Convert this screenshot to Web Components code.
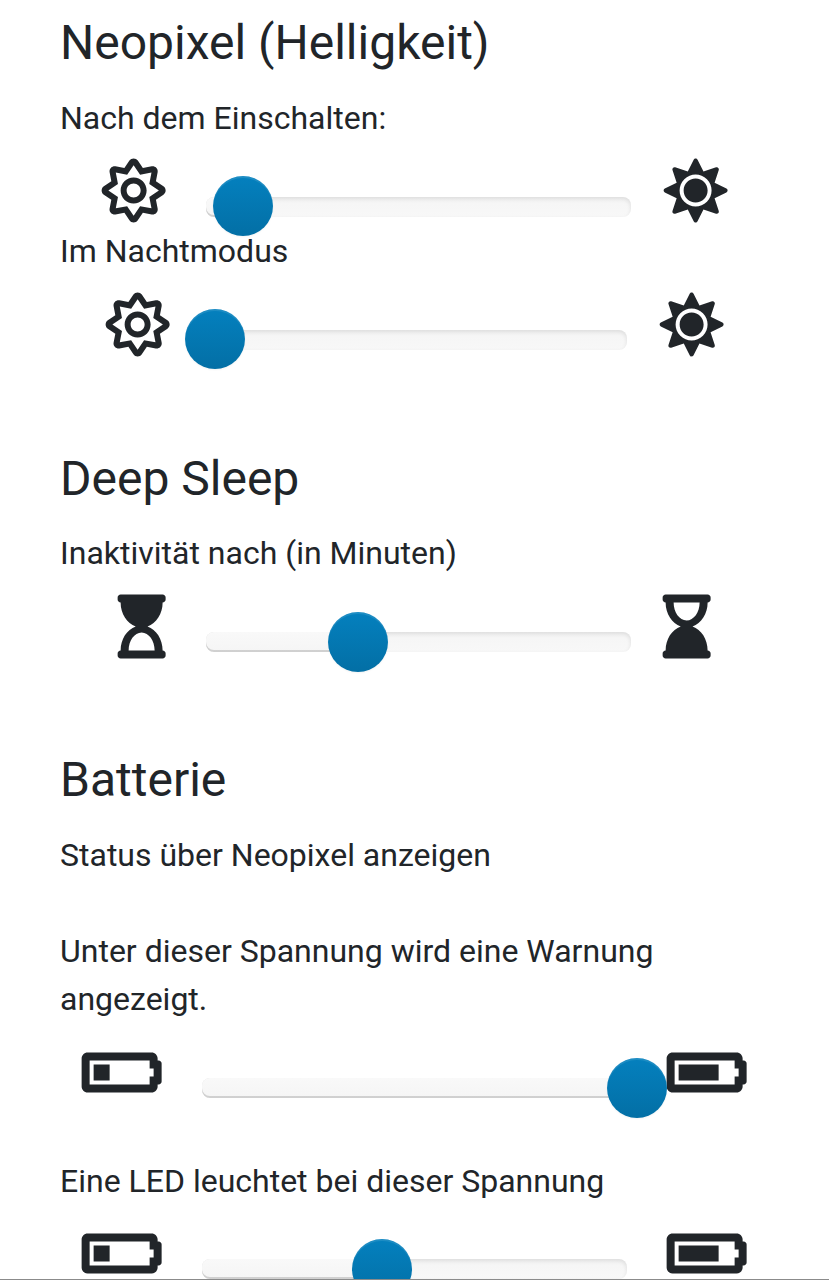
<!DOCTYPE html>
<html lang="de">
<head>
<meta charset="utf-8">
<title>Einstellungen</title>
<style>
html, body { margin: 0; height: 1280px; overflow: hidden; background: #fff; }
</style>
</head>
<body>
<settings-page></settings-page>
<script>
const ICONS = {
  'sun-outline': [512, 'M494.2 221.9l-59.8-40.5 13.7-71c2.6-13.2-1.6-26.8-11.1-36.4-9.6-9.5-23.2-13.7-36.2-11.1l-70.9 13.7-40.4-59.9c-15.1-22.3-51.9-22.3-67 0l-40.4 59.9-70.8-13.7C98 60.4 84.5 64.5 75 74.1c-9.5 9.6-13.7 23.1-11.1 36.3l13.7 71-59.8 40.5C6.6 229.5 0 242 0 255.5s6.7 26 17.8 33.5l59.8 40.5-13.7 71c-2.6 13.2 1.6 26.8 11.1 36.3 9.5 9.5 22.9 13.7 36.3 11.1l70.8-13.7 40.4 59.9C230 505.3 242.6 512 256 512s26-6.7 33.5-17.8l40.4-59.9 70.9 13.7c13.4 2.7 26.8-1.6 36.3-11.1 9.5-9.5 13.6-23.1 11.1-36.3l-13.7-71 59.8-40.5c11.1-7.5 17.8-20.1 17.8-33.5-.1-13.6-6.7-26.1-17.9-33.7zm-112.9 85.6l17.6 91.2-91-17.6L256 458l-51.9-77-90.9 17.6 17.6-91.2-76.8-52 76.8-52-17.6-91.2 91 17.6L256 53l51.9 76.9 91-17.6-17.6 91.1 76.8 52-76.8 52.1zM256 152c-57.3 0-104 46.7-104 104s46.7 104 104 104 104-46.7 104-104-46.7-104-104-104zm0 160c-30.9 0-56-25.1-56-56s25.1-56 56-56 56 25.1 56 56-25.1 56-56 56z'],
  'sun-solid': [512, 'M256 160c-52.9 0-96 43.1-96 96s43.1 96 96 96 96-43.1 96-96-43.1-96-96-96zm246.4 80.5l-94.7-47.3 33.5-100.4c4.5-13.6-8.4-26.5-21.9-21.9l-100.4 33.5-47.4-94.8c-6.4-12.8-24.6-12.8-31 0l-47.3 94.7L92.7 70.8c-13.6-4.5-26.5 8.4-21.9 21.9l33.5 100.4-94.7 47.4c-12.8 6.4-12.8 24.6 0 31l94.7 47.3-33.5 100.5c-4.5 13.6 8.4 26.5 21.9 21.9l100.4-33.5 47.3 94.7c6.4 12.8 24.6 12.8 31 0l47.3-94.7 100.4 33.5c13.6 4.5 26.5-8.4 21.9-21.9l-33.5-100.4 94.7-47.3c13-6.5 13-24.7.2-31.1zm-155.9 106c-49.9 49.9-131.1 49.9-181 0-49.9-49.9-49.9-131.1 0-181 49.9-49.9 131.1-49.9 181 0 49.9 49.9 49.9 131.1 0 181z'],
  'hourglass-start': [384, 'M360 0H24C10.745 0 0 10.745 0 24v16c0 13.255 10.745 24 24 24 0 90.965 51.016 167.734 120.842 192C75.016 280.266 24 357.035 24 448c-13.255 0-24 10.745-24 24v16c0 13.255 10.745 24 24 24h336c13.255 0 24-10.745 24-24v-16c0-13.255-10.745-24-24-24 0-90.965-51.016-167.734-120.842-192C308.984 231.734 360 154.965 360 64c13.255 0 24-10.745 24-24V24c0-13.255-10.745-24-24-24zm-64 448H88c0-77.458 46.204-144 104-144 57.786 0 104 66.517 104 144z'],
  'hourglass-end': [384, 'M360 64c13.255 0 24-10.745 24-24V24c0-13.255-10.745-24-24-24H24C10.745 0 0 10.745 0 24v16c0 13.255 10.745 24 24 24 0 90.965 51.016 167.734 120.842 192C75.016 280.266 24 357.035 24 448c-13.255 0-24 10.745-24 24v16c0 13.255 10.745 24 24 24h336c13.255 0 24-10.745 24-24v-16c0-13.255-10.745-24-24-24 0-90.965-51.016-167.734-120.842-192C308.984 231.734 360 154.965 360 64zM192 208c-57.787 0-104-66.518-104-144h208c0 77.945-46.51 144-104 144z'],
  'battery-low': [640, 'M544 160v64h32v64h-32v64H64V160h480m16-64H48c-26.51 0-48 21.49-48 48v224c0 26.51 21.49 48 48 48h512c26.51 0 48-21.49 48-48v-16h8c13.255 0 24-10.745 24-24V184c0-13.255-10.745-24-24-24h-8v-16c0-26.51-21.49-48-48-48zm-336 96H96v128h128V192z'],
  'battery-high': [640, 'M544 160v64h32v64h-32v64H64V160h480m16-64H48c-26.51 0-48 21.49-48 48v224c0 26.51 21.49 48 48 48h512c26.51 0 48-21.49 48-48v-16h8c13.255 0 24-10.745 24-24V184c0-13.255-10.745-24-24-24h-8v-16c0-26.51-21.49-48-48-48zm-144 96H96v128h320V192z']
};

customElements.define('ui-icon', class extends HTMLElement {
  connectedCallback() {
    const [w, d] = ICONS[this.getAttribute('name')];
    this.attachShadow({ mode: 'open' }).innerHTML = `
      <style>:host { display: block; height: 64px; width: ${w / 8}px } svg { display: block; fill: currentColor; overflow: visible }</style>
      <svg width="${w / 8}" height="64" viewBox="0 0 ${w} 512"><path transform="translate(-3 -4)" d="${d}"/></svg>`;
  }
});

customElements.define('range-slider', class extends HTMLElement {
  connectedCallback() {
    const v = this.getAttribute('value');
    this.attachShadow({ mode: 'open' }).innerHTML = `
      <style>
        :host { display: block; position: relative; height: 20px; border-radius: 8px; background: linear-gradient(#f5f5f5, #f8f8f8); box-shadow: inset 0 2px 4px rgba(0,0,0,.1) }
        .selection { height: 20px; width: ${v}px; box-sizing: border-box; border-radius: 8px 0 0 8px; background: linear-gradient(#f9f9f9, #f5f5f5); box-shadow: inset 0 -2px 0 rgba(0,0,0,.15) }
        .thumb { position: absolute; left: ${v - 30}px; top: var(--thumb-top, -20px); width: 60px; height: 60px; border-radius: 50%; background: linear-gradient(#0480be, #036fa5); box-shadow: inset 0 2px 0 rgba(255,255,255,.1), 0 1px 2px rgba(0,0,0,.05) }
      </style>
      <div class="selection"></div><div class="thumb"></div>`;
  }
});

customElements.define('slider-row', class extends HTMLElement {
  connectedCallback() {
    this.attachShadow({ mode: 'open' }).innerHTML = `
      <style>
        :host { display: grid; height: 64px; grid-template-columns: var(--lead) 425.4px auto; margin-top: var(--top, 17px) }
        .low { padding-left: var(--indent) }
        .track { padding-top: var(--track-top, 37px) }
        .high { padding-left: var(--gap) }
      </style>
      <div class="low"><slot name="low"></slot></div>
      <div class="track"><slot></slot></div>
      <div class="high"><slot name="high"></slot></div>`;
  }
});

customElements.define('settings-section', class extends HTMLElement {
  connectedCallback() {
    this.attachShadow({ mode: 'open' }).innerHTML = `
      <style>
        :host { display: block }
        h2 { margin: 0 0 var(--heading-gap, 22px); font-size: 48px; font-weight: 400; line-height: 58px }
      </style>
      <h2>${this.getAttribute('heading')}</h2><slot></slot>`;
  }
});

customElements.define('settings-page', class extends HTMLElement {
  connectedCallback() {
    this.attachShadow({ mode: 'open' }).innerHTML = `
      <style>
        :host { display: block; box-sizing: border-box; height: 1280px; overflow: hidden; padding: 14px 61px 0 60px; border-bottom: 1px solid #8b8b8b; color: #212529; font: 400 32px/48px Roboto, "Liberation Sans", sans-serif }
        p { margin: 0 }
        .sun { --lead: 145.6px; --indent: 42px; --gap: 33px; --track-top: 38px; --thumb-top: -21px }
        .night { --lead: 141.6px; --indent: 46px; --gap: 33px; --top: 18px; --thumb-top: -21px }
        .time { --lead: 145.6px; --indent: 58px; --gap: 32.5px; --top: 18px }
        .volt { --lead: 141.6px; --indent: 22px; --gap: 40.4px; --top: 18px }
      </style>
      <settings-section heading="Neopixel (Helligkeit)">
        <p>Nach dem Einschalten:</p>
        <slider-row class="sun"><ui-icon slot="low" name="sun-outline"></ui-icon><range-slider value="37"></range-slider><ui-icon slot="high" name="sun-solid"></ui-icon></slider-row>
        <p style="margin-top:4px">Im Nachtmodus</p>
        <slider-row class="night"><ui-icon slot="low" name="sun-outline"></ui-icon><range-slider value="13.4"></range-slider><ui-icon slot="high" name="sun-solid"></ui-icon></slider-row>
      </settings-section>
      <settings-section heading="Deep Sleep" style="margin-top:93px; --heading-gap:21px">
        <p>Inaktivität nach (in Minuten)</p>
        <slider-row class="time"><ui-icon slot="low" name="hourglass-start"></ui-icon><range-slider value="152.3"></range-slider><ui-icon slot="high" name="hourglass-end"></ui-icon></slider-row>
      </settings-section>
      <settings-section heading="Batterie" style="margin-top:92px">
        <p>Status über Neopixel anzeigen</p>
        <p style="margin-top:48px">Unter dieser Spannung wird eine Warnung angezeigt.</p>
        <slider-row class="volt"><ui-icon slot="low" name="battery-low"></ui-icon><range-slider value="435.4"></range-slider><ui-icon slot="high" name="battery-high"></ui-icon></slider-row>
        <p style="margin-top:52px">Eine LED leuchtet bei dieser Spannung</p>
        <slider-row class="volt" style="--top:17px"><ui-icon slot="low" name="battery-low"></ui-icon><range-slider value="180.2"></range-slider><ui-icon slot="high" name="battery-high"></ui-icon></slider-row>
      </settings-section>`;
  }
});
</script>
</body>
</html>
